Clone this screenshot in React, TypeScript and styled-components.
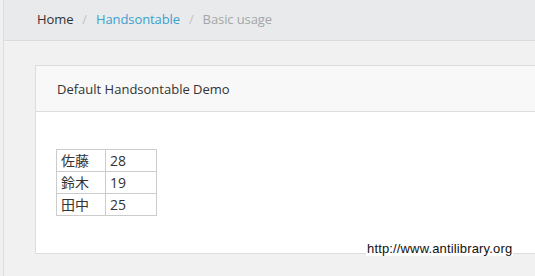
import React from "react";
import styled, { createGlobalStyle } from "styled-components";

const Global = createGlobalStyle`
  html, body { margin: 0; padding: 0; }
  body {
    background: #f1f1f1;
    font-family: "Open Sans", "Noto Sans CJK JP", sans-serif;
    overflow: hidden;
  }
`;

const Page = styled.div`
  position: relative;
  display: flex;
  width: 535px;
  height: 276px;
  overflow: hidden;
  background: #f1f1f1;
`;

const Sidebar = styled.div`
  width: 3px;
  flex: none;
  background: #f0f0f0;
  border-right: 1px solid #dedede;
`;

const Main = styled.div`
  flex: 1;
  display: flex;
  flex-direction: column;
  min-width: 0;
`;

const Breadcrumb = styled.nav`
  height: 41px;
  flex: none;
  display: flex;
  align-items: center;
  padding-left: 33px;
  padding-bottom: 3px;
  box-sizing: border-box;
  background: #e9eaeb;
  border-bottom: 1px solid #dadbdc;
  box-shadow: 0 1px 0 #f4f4f4;
  font-size: 13px;
  letter-spacing: -0.1px;
`;

const Crumb = styled.span<{ $tone: "dark" | "link" | "muted" }>`
  color: ${(p) => (p.$tone === "dark" ? "#333" : p.$tone === "link" ? "#3ba1cf" : "#a3a7aa")};
`;

const Sep = styled.span`
  color: #c2c2c2;
  padding: 0 9px;
`;

const Content = styled.div`
  padding: 24px 0 0 31px;
`;

const Card = styled.section`
  background: #fff;
  border: 1px solid #dddddd;
  border-right: none;
`;

const CardHeader = styled.header`
  height: 45px;
  display: flex;
  align-items: center;
  padding-left: 21px;
  background: #f8f8f8;
  border-bottom: 1px solid #dddddd;
  font-size: 13px;
  color: #333;
`;

const CardBody = styled.div`
  height: 141px;
  padding: 37px 0 0 20px;
  box-sizing: border-box;
`;

const Table = styled.table`
  border-collapse: collapse;
  font-size: 14px;
  color: #333;
  font-family: "Open Sans", "Noto Sans CJK JP", sans-serif;
`;

const Cell = styled.td<{ $w: number }>`
  width: ${(p) => p.$w}px;
  height: 22px;
  padding: 0 4px;
  box-sizing: border-box;
  border: 1px solid #cccccc;
  line-height: 21px;
  white-space: nowrap;
`;

const Watermark = styled.div`
  position: absolute;
  left: 366px;
  top: 241px;
  font-family: "Liberation Sans", sans-serif;
  font-size: 13px;
  letter-spacing: 0.15px;
  color: #111;
  background: #fff;
  line-height: 15px;
  padding: 0 1px;
`;

const rows: [string, number][] = [
  ["佐藤", 28],
  ["鈴木", 19],
  ["田中", 25],
];

export default function App() {
  return (
    <Page>
      <Global />
      <Sidebar />
      <Main>
        <Breadcrumb>
          <Crumb $tone="dark">Home</Crumb>
          <Sep>/</Sep>
          <Crumb $tone="link">Handsontable</Crumb>
          <Sep>/</Sep>
          <Crumb $tone="muted">Basic usage</Crumb>
        </Breadcrumb>
        <Content>
          <Card>
            <CardHeader>Default Handsontable Demo</CardHeader>
            <CardBody>
              <Table>
                <tbody>
                  {rows.map(([name, age]) => (
                    <tr key={name}>
                      <Cell $w={49}>{name}</Cell>
                      <Cell $w={51}>{age}</Cell>
                    </tr>
                  ))}
                </tbody>
              </Table>
            </CardBody>
          </Card>
        </Content>
      </Main>
      <Watermark>http://www.antilibrary.org</Watermark>
    </Page>
  );
}
